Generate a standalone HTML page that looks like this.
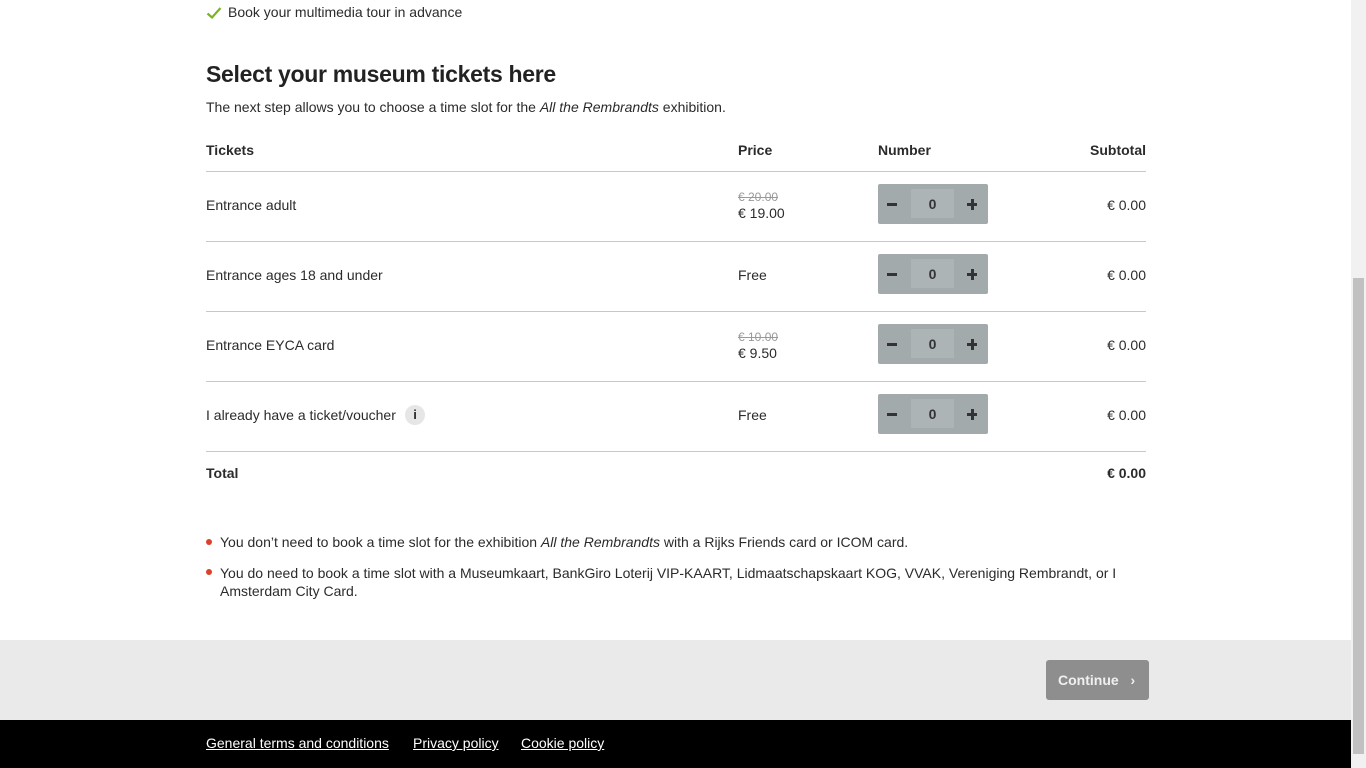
<!DOCTYPE html>
<html><head><meta charset="utf-8"><style>
*{margin:0;padding:0;box-sizing:border-box}
body{width:1366px;height:768px;overflow:hidden;background:#fff;font-family:"Liberation Sans",sans-serif;color:#2b2b2b;position:relative;font-size:14px}
.a{position:absolute;white-space:nowrap}
.r{position:absolute;white-space:nowrap;right:220px;text-align:right}
.line{position:absolute;left:206px;width:940px;height:1px;background:#c8c8c8}
.step{position:absolute;left:878px;width:110px;height:40px;background:#a3aaac;border-radius:2px}
.step .f{position:absolute;left:33px;top:5px;width:43px;height:29px;background:#adb4b6;text-align:center;line-height:30px;font-weight:bold;font-size:14px;color:#333}
.step .m{position:absolute;left:9px;top:19px;width:10px;height:3px;background:#333}
.step .p1{position:absolute;left:89px;top:19px;width:10px;height:3px;background:#333}
.step .p2{position:absolute;left:92.5px;top:15px;width:3px;height:11px;background:#333}
.dot{position:absolute;left:206px;width:6px;height:6px;border-radius:50%;background:#d8432a}
.ft a{color:#fff;text-decoration:underline;font-size:14px}
</style></head><body>
<svg class="a" style="left:206px;top:6px" width="16" height="14" viewBox="0 0 16 14"><path d="M1.5 7.5 L6 11.5 L14.5 2" fill="none" stroke="#7ab51d" stroke-width="2.2"/></svg>
<div class="a" style="left:228px;top:4px;font-size:14px">Book your multimedia tour in advance</div>
<div class="a" style="left:206px;top:61px;font-size:23px;font-weight:bold;letter-spacing:-0.3px;color:#222">Select your museum tickets here</div>
<div class="a" style="left:206px;top:99px">The next step allows you to choose a time slot for the <i>All the Rembrandts</i> exhibition.</div>
<div class="a" style="left:206px;top:142px;font-weight:bold">Tickets</div>
<div class="a" style="left:738px;top:142px;font-weight:bold">Price</div>
<div class="a" style="left:878px;top:142px;font-weight:bold">Number</div>
<div class="r" style="top:142px;font-weight:bold">Subtotal</div>
<div class="line" style="top:171px"></div>
<div class="line" style="top:241px"></div>
<div class="line" style="top:311px"></div>
<div class="line" style="top:381px"></div>
<div class="line" style="top:451px"></div>

<div class="a" style="left:206px;top:197px">Entrance adult</div>
<div class="a" style="left:738px;top:190px;font-size:12px;color:#999;text-decoration:line-through">€ 20.00</div>
<div class="a" style="left:738px;top:205px">€ 19.00</div>
<div class="step" style="top:184px"><div class="m"></div><div class="f">0</div><div class="p1"></div><div class="p2"></div></div>
<div class="r" style="top:197px">€ 0.00</div>

<div class="a" style="left:206px;top:267px">Entrance ages 18 and under</div>
<div class="a" style="left:738px;top:267px">Free</div>
<div class="step" style="top:254px"><div class="m"></div><div class="f">0</div><div class="p1"></div><div class="p2"></div></div>
<div class="r" style="top:267px">€ 0.00</div>

<div class="a" style="left:206px;top:337px">Entrance EYCA card</div>
<div class="a" style="left:738px;top:330px;font-size:12px;color:#999;text-decoration:line-through">€ 10.00</div>
<div class="a" style="left:738px;top:345px">€ 9.50</div>
<div class="step" style="top:324px"><div class="m"></div><div class="f">0</div><div class="p1"></div><div class="p2"></div></div>
<div class="r" style="top:337px">€ 0.00</div>

<div class="a" style="left:206px;top:407px">I already have a ticket/voucher</div>
<div class="a" style="left:405px;top:405px;width:20px;height:20px;border-radius:50%;background:#e6e6e6;text-align:center;line-height:20px;font-size:13px;font-weight:bold">i</div>
<div class="a" style="left:738px;top:407px">Free</div>
<div class="step" style="top:394px"><div class="m"></div><div class="f">0</div><div class="p1"></div><div class="p2"></div></div>
<div class="r" style="top:407px">€ 0.00</div>

<div class="a" style="left:206px;top:465px;font-weight:bold">Total</div>
<div class="r" style="top:465px;font-weight:bold">€ 0.00</div>

<div class="dot" style="top:539px"></div>
<div class="a" style="left:220px;top:534px">You don’t need to book a time slot for the exhibition <i>All the Rembrandts</i> with a Rijks Friends card or ICOM card.</div>
<div class="dot" style="top:569px"></div>
<div class="a" style="left:220px;top:564px;line-height:18px">You do need to book a time slot with a Museumkaart, BankGiro Loterij VIP-KAART, Lidmaatschapskaart KOG, VVAK, Vereniging Rembrandt, or I<br>Amsterdam City Card.</div>

<div class="a" style="left:0;top:640px;width:1351px;height:80px;background:#eaeaea"></div>
<div class="a" style="left:1046px;top:660px;width:103px;height:40px;background:#8e8e8e;border-radius:3px;color:#f0f0f0;font-weight:bold;line-height:40px;padding-left:12px">Continue <span style="margin-left:8px">›</span></div>
<div class="a ft" style="left:0;top:720px;width:1351px;height:48px;background:#000"></div>
<div class="a ft" style="left:206px;top:735px"><a>General terms and conditions </a></div>
<div class="a ft" style="left:413px;top:735px"><a>Privacy policy </a></div>
<div class="a ft" style="left:521px;top:735px"><a>Cookie policy</a></div>

<div class="a" style="left:1351px;top:0;width:15px;height:768px;background:#f1f1f1"></div>
<div class="a" style="left:1353px;top:278px;width:11px;height:476px;background:#c1c1c1"></div>
</body></html>
